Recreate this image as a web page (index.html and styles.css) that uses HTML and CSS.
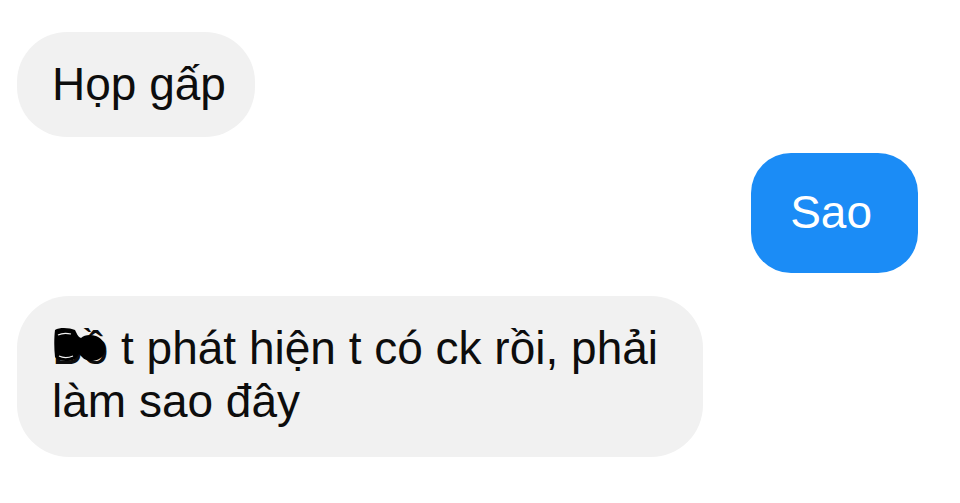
FILE: index.html
```html
<!DOCTYPE html>
<html lang="vi">
<head>
<meta charset="utf-8">
<link rel="stylesheet" href="styles.css">
</head>
<body>
<div class="chat">
  <div class="row left"><div class="bubble gray b1">Họp gấp</div></div>
  <div class="row right"><div class="bubble blue b2">Sao</div></div>
  <div class="row left"><div class="bubble gray b3"><span class="censor">Bồ<svg class="scribble" viewBox="0 0 54 36" width="54" height="36"><path d="M1 2 C6 -1 16 0 21 2 C23 6 24 9 27 10 C30 7 36 6 42 8 C49 11 52 17 51 23 C50 29 44 33 37 33 C31 33 28 29 25 26 C23 29 21 33 14 33 C8 33 3 32 1 29 C0 20 0 10 1 2 Z" fill="#000"/><path d="M4 7 C8 5 13 5 17 6 M5 28 C9 30 14 30 19 28" stroke="#f1f1f1" stroke-width="1.2" fill="none"/></svg></span> t phát hiện t có ck rồi, phải<br>làm sao đây</div></div>
</div>
</body>
</html>
```
FILE: styles.css
```css
html, body {
  margin: 0;
  padding: 0;
  background: #ffffff;
}
.chat {
  display: flex;
  flex-direction: column;
  padding: 32px 42px 0 17px;
  font-family: "Liberation Sans", Arial, sans-serif;
  font-size: 46px;
  color: #0d0d0d;
}
.row {
  display: flex;
}
.row.left { justify-content: flex-start; }
.row.right { justify-content: flex-end; }
.bubble {
  line-height: 53px;
  white-space: nowrap;
}
.gray { background: #f1f1f1; }
.blue { background: #1b8cf6; color: #ffffff; }
.b1 {
  padding: 26px 29px 26px 35px;
  border-radius: 50px;
}
.b2 {
  margin-top: 16px;
  padding: 33px 46px 34px 39px;
  border-radius: 40px;
}
.b3 {
  margin-top: 23px;
  padding: 26px 40px 29px 35px;
  border-radius: 52px;
  width: 611px;
}
.censor {
  position: relative;
  display: inline-block;
}
.scribble {
  position: absolute;
  left: 2px;
  top: 6px;
}
```
